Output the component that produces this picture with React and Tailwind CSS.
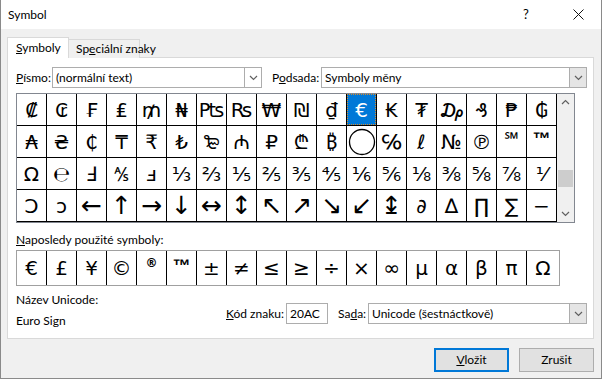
import React from "react";

const row1 = ["₡", "₢", "₣", "₤", "₥", "₦", "₧", "₨", "₩", "₪", "₫", "€", "₭", "₮", "₯", "₰", "₱", "₲"];
const row2 = ["₳", "₴", "₵", "₸", "₹", "₺", "₻", "₼", "₽", "₾", "₿", "circle", "℅", "ℓ", "№", "℗", "℠", "™"];
const row3 = ["Ω", "℮", "Ⅎ", "⅍", "ⅎ", "⅓", "⅔", "⅕", "⅖", "⅗", "⅘", "⅙", "⅚", "⅛", "⅜", "⅝", "⅞", "⅟"];
const row4 = ["Ↄ", "ↄ", "←", "↑", "→", "↓", "↔", "↕", "↖", "↗", "↘", "↙", "↨", "∂", "∆", "∏", "∑", "−"];
const recent = ["€", "£", "¥", "©", "®", "™", "±", "≠", "≤", "≥", "÷", "×", "∞", "µ", "α", "β", "π", "Ω"];

const arrows = ["←", "↑", "→", "↓", "↔", "↕", "↖", "↗", "↘", "↙", "↨"];

function glyphClass(ch) {
    if (ch === "™" || ch === "℠") return "text-[18px] font-bold font-['Liberation_Sans','Noto_Sans',sans-serif] -mt-[4px]";
    if (ch === "®") return "text-[12px] font-bold -mt-[10px]";
    if (arrows.includes(ch)) return "text-[25px]";
    return "text-[20px]";
}

function Chevron({ up = false }) {
    return (
        <svg width="9" height="6" viewBox="0 0 9 6" className={up ? "rotate-180" : ""}>
            <path d="M1 1 L4.5 4.5 L8 1" fill="none" stroke="#606060" strokeWidth="1.2" />
        </svg>
    );
}

function Select({ value, width, grayBtn }) {
    return (
        <div className={`flex h-[21px] border border-[#adadad] bg-white ${width}`}>
            <div className="flex-1 pl-[3px] leading-[19px] whitespace-nowrap">{value}</div>
            <div className={`w-[17px] flex items-center justify-center border-l border-[#adadad] ${grayBtn ? "bg-[#e5e5e5]" : "bg-white"}`}>
                <Chevron />
            </div>
        </div>
    );
}

function Cell({ ch, selected }) {
    return (
        <div className={`relative w-[30px] h-[32px] border-r border-b border-black flex items-center justify-center ${selected ? "bg-[#0078d7] text-white" : ""}`}>
            {ch === "circle" ? (
                <svg width="28" height="28" viewBox="0 0 28 28"><circle cx="14" cy="14" r="12.5" fill="none" stroke="#000" strokeWidth="1.3" /></svg>
            ) : (
                <span className={glyphClass(ch)}>{ch}</span>
            )}
            {selected && <div className="absolute left-0 top-0 w-[29px] h-[31px] border border-dotted border-[#d98b2b]" />}
        </div>
    );
}

export default function App() {
    return (
        <div className="w-[603px] h-[379px] bg-white font-['Lato','Noto_Sans',sans-serif] text-[12px] text-black whitespace-nowrap">
            <div className="w-[602px] h-[379px] bg-[#f0f0f0] border-l border-r border-b border-[#8a8a8a]">
                <div className="h-[29px] bg-white flex items-center pl-[7px]">
                    <span className="flex-1">Symbol</span>
                    <span className="w-[10px] text-[13px] mr-[40px]">?</span>
                    <svg width="11" height="11" viewBox="0 0 11 11" className="mr-[17px]">
                        <path d="M0.5 0.5 L10.5 10.5 M10.5 0.5 L0.5 10.5" stroke="#111" strokeWidth="1" />
                    </svg>
                </div>

                <div className="px-[6px] pt-[8px]">
                    <div className="flex items-end h-[21px]">
                        <div className="relative z-10 h-[21px] w-[62px] bg-white border-t border-l border-r border-[#d9d9d9] pl-[8px] leading-[19px]">
                            <u>S</u>ymboly
                        </div>
                        <div className="h-[19px] w-[72px] -ml-px bg-[#f0f0f0] border border-b-0 border-[#d9d9d9] pl-[7px] leading-[18px]">
                            Sp<u>e</u>ciální znaky
                        </div>
                    </div>

                    <div className="w-[587px] h-[282px] -mt-px border border-[#d9d9d9] bg-white pl-[8px] pt-[9px]">
                        <div className="flex items-center">
                            <span className="w-[36px]"><u>P</u>ísmo:</span>
                            <Select value="(normální text)" width="w-[210px]" />
                            <span className="w-[49px] ml-[10px]">P<u>o</u>dsada:</span>
                            <Select value="Symboly měny" width="w-[266px]" grayBtn />
                        </div>

                        <div className="mt-[5px] w-[559px] flex border border-[#828790] font-['DejaVu_Sans','Noto_Sans',sans-serif]">
                            <div className="flex flex-col">
                                {[row1, row2, row3, row4].map((r, ri) => (
                                    <div key={ri} className="flex">
                                        {r.map((ch, ci) => (
                                            <Cell key={ci} ch={ch} selected={ri === 0 && ci === 11} />
                                        ))}
                                    </div>
                                ))}
                            </div>
                            <div className="w-[17px] flex flex-col items-center bg-[#f0f0f0]">
                                <div className="h-[16px] flex items-center"><Chevron up /></div>
                                <div className="flex-1 w-full flex flex-col">
                                    <div className="h-[60px]" />
                                    <div className="h-[17px] mx-[1px] bg-[#cdcdcd]" />
                                </div>
                                <div className="h-[16px] flex items-center"><Chevron /></div>
                            </div>
                        </div>

                        <div className="mt-[9px] leading-[16px]"><u>N</u>aposledy použité symboly:</div>
                        <div className="mt-[2px] w-[544px] h-[36px] flex border border-[#a0a0a0] font-['DejaVu_Sans','Noto_Sans',sans-serif]">
                            {recent.map((ch, i) => (
                                <div key={i} className={`h-full flex items-center justify-center ${i < recent.length - 1 ? "w-[30px] border-r border-black" : "flex-1"}`}>
                                    <span className={glyphClass(ch).replace("text-[25px]", "text-[20px]")}>{ch}</span>
                                </div>
                            ))}
                        </div>

                        <div className="flex">
                            <div className="w-[210px] mt-[6px] leading-[16px]">
                                <div>Název Unicode:</div>
                                <div className="mt-[5px]">Euro Sign</div>
                            </div>
                            <div className="flex items-center mt-[17px] h-[21px]">
                                <span className="w-[60px]"><u>K</u>ód znaku:</span>
                                <div className="w-[42px] h-[21px] border border-[#adadad] bg-white pl-[3px] leading-[19px]">20AC</div>
                                <span className="ml-[10px] w-[30px]">Sa<u>d</u>a:</span>
                                <Select value="Unicode (šestnáctkově)" width="w-[219px]" grayBtn />
                            </div>
                        </div>
                    </div>

                    <div className="flex justify-end gap-[10px] mt-[9px] pr-[1px]">
                        <div className="w-[75px] h-[24px] border-2 border-[#0078d7] bg-[#e1e1e1] flex items-center justify-center">
                            <span><u>V</u>ložit</span>
                        </div>
                        <div className="w-[75px] h-[24px] border border-[#adadad] bg-[#e1e1e1] flex items-center justify-center">
                            Zrušit
                        </div>
                    </div>
                </div>
            </div>
        </div>
    );
}
